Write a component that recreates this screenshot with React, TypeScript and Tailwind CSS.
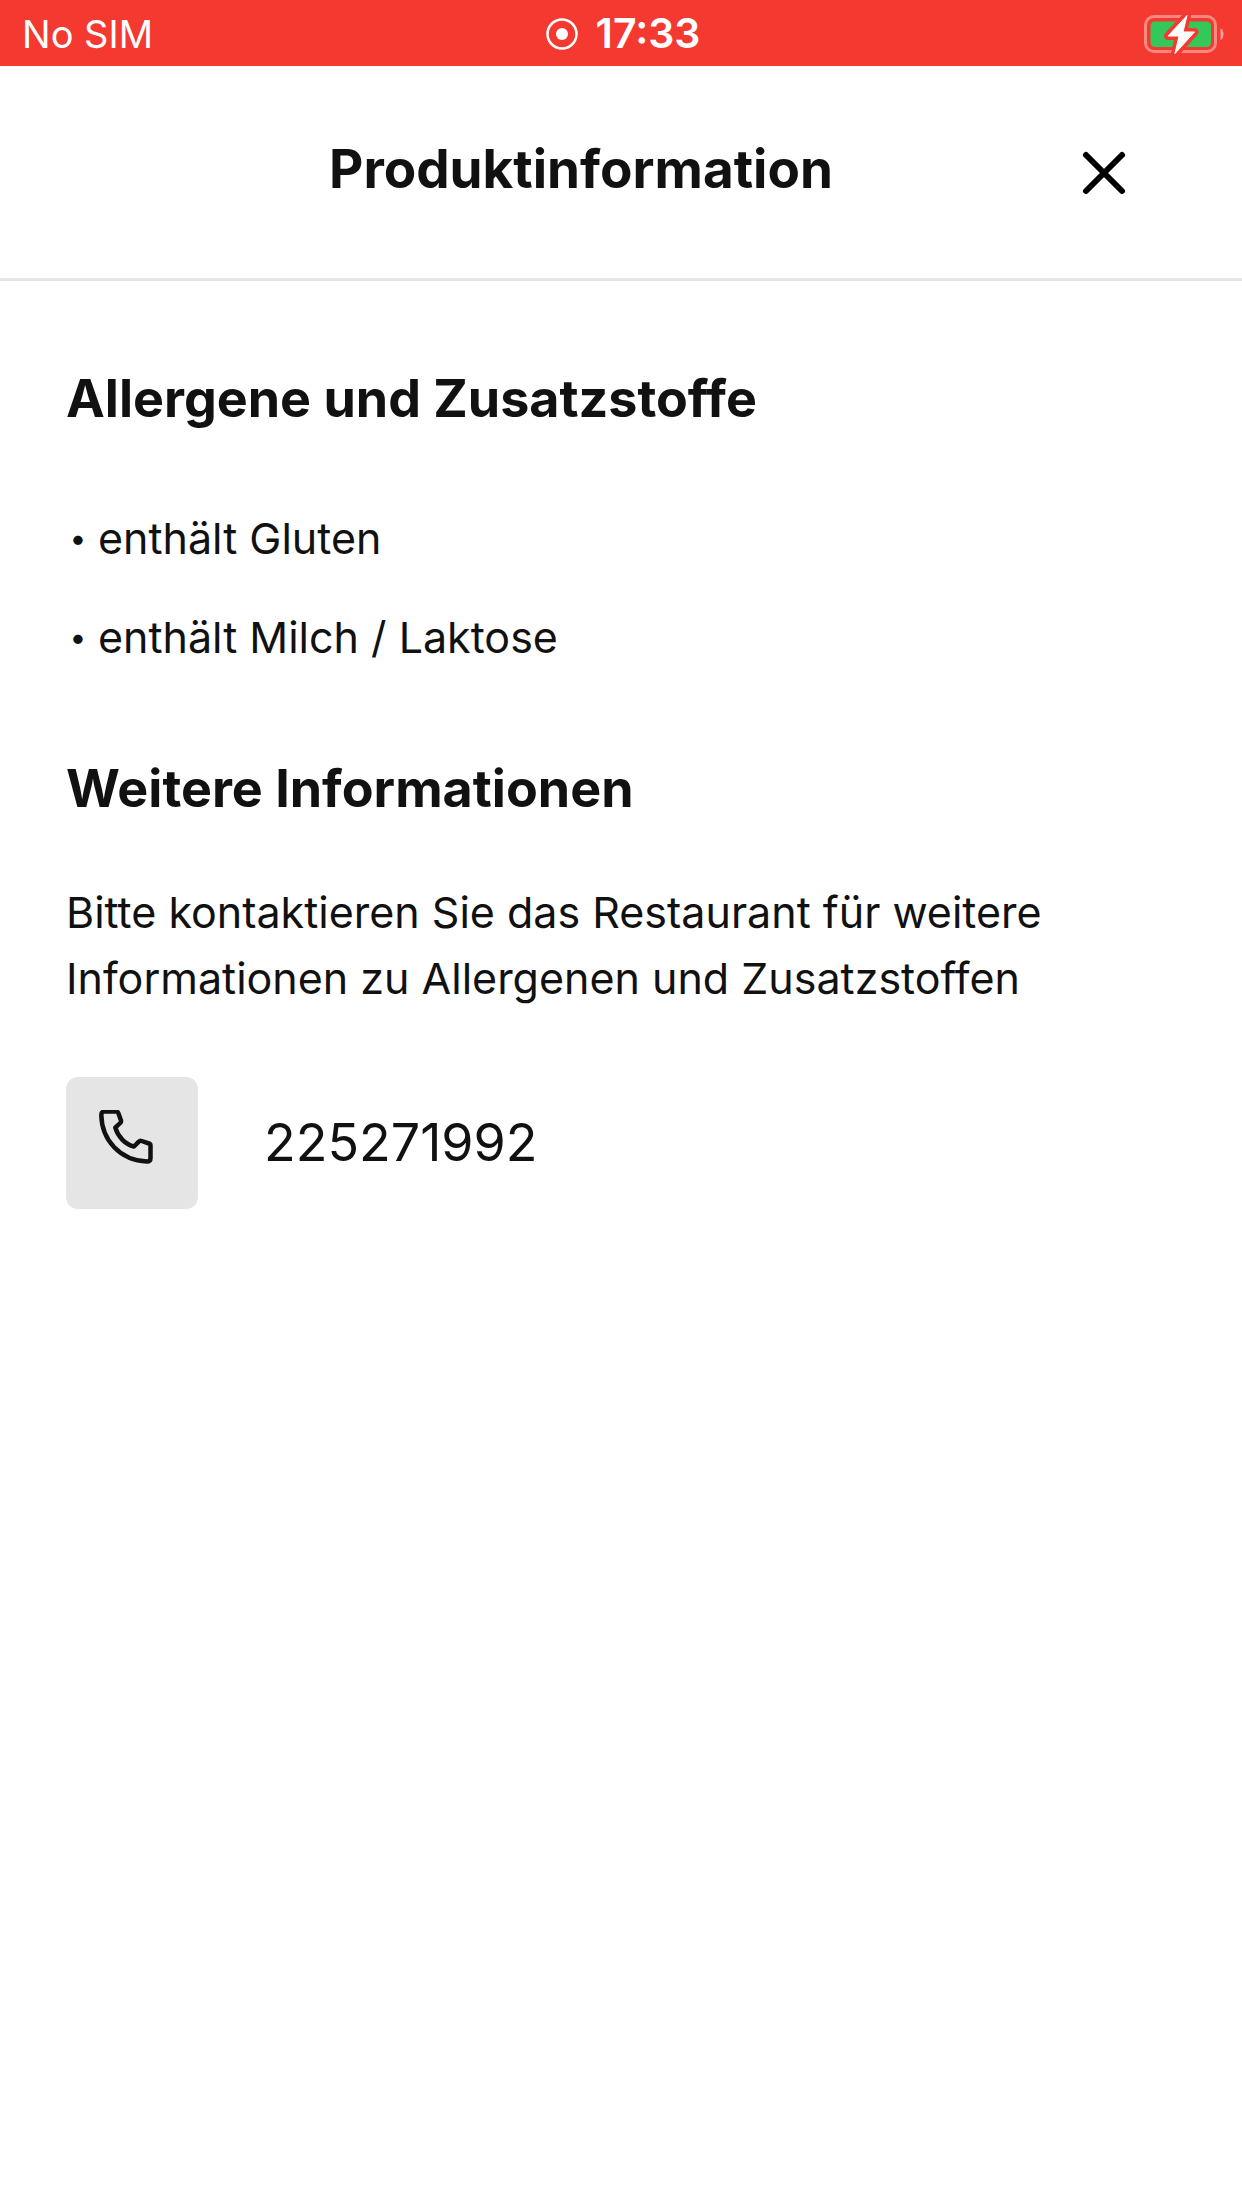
import { X } from "lucide-react"

const allergens = ["enthält Gluten", "enthält Milch / Laktose"]

function BatteryIcon() {
  const bolt = "M43 1.5 24 22h11l-4 17.5L50.5 18H39z"

  return (
    <svg className="h-10 w-20 justify-self-end" viewBox="0 0 80 40" fill="none">
      <rect x="1.5" y="2.5" width="70" height="35" rx="8.5" stroke="white" strokeOpacity="0.4" strokeWidth="3" />
      <rect x="6.5" y="7.5" width="60.5" height="25.5" rx="4.5" fill="#34c759" />
      <path d="M76.5 14.5c4 1.5 4 10 0 11.5z" fill="white" fillOpacity="0.5" />
      <path d={bolt} fill="#f33930" stroke="#f33930" strokeWidth="8" strokeLinejoin="round" />
      <path d={bolt} fill="white" stroke="white" strokeLinejoin="round" />
    </svg>
  )
}

function PhoneIcon() {
  return (
    <svg
      className="size-[66px]"
      viewBox="0 0 66 66"
      fill="none"
      stroke="currentColor"
      strokeWidth="4.5"
      strokeLinecap="round"
      strokeLinejoin="round"
    >
      <path d="M5.5 1.5H17Q18.7 1.5 19.3 3L22 10.5Q22.3 12 21.200 13L16.3 17.7C19 27 26.5 34.5 35 36.5L39.8 31.7Q41 30.400 42.700 31L50 33.5Q51.5 34 51.5 35.700V48Q51.5 51.5 48 51.5C21 50.5 2.800 30 2.300 5Q2.300 1.5 5.5 1.5Z" />
    </svg>
  )
}

function StatusBar() {
  return (
    <div className="grid h-[66px] grid-cols-3 items-center bg-[#f33930] pt-0.5 pr-[18px] pl-[22px] text-white">
      <span className="text-[38px]">No SIM</span>
      <div className="flex items-center justify-center gap-[18px] text-[41px] font-semibold">
        <svg className="size-8" viewBox="0 0 32 32" fill="none">
          <circle cx="16" cy="16" r="14.5" stroke="white" strokeWidth="2.5" />
          <circle cx="16" cy="16" r="6" fill="white" />
        </svg>
        <time>17:33</time>
      </div>
      <BatteryIcon />
    </div>
  )
}

export default function App() {
  return (
    <div className="min-h-screen bg-white font-[Inter,sans-serif] text-[#111111]">
      <StatusBar />
      <header className="flex h-[215px] items-center border-b-3 border-[#e5e5e5] px-[98px] pt-0.5">
        <h1 className="flex-1 pb-1.5 text-center text-[53px] font-bold">Produktinformation</h1>
        <button type="button" aria-label="Schließen" className="flex w-20 justify-center text-black">
          <X className="size-[72px]" />
        </button>
      </header>
      <main className="px-[66px] pt-[78px]">
        <h2 className="text-[52px] leading-20 font-bold">Allergene und Zusatzstoffe</h2>
        <ul className="mt-[66px] flex flex-col gap-8 text-[43px] leading-[67px]">
          {allergens.map((allergen) => (
            <li key={allergen} className="flex items-center gap-2">
              <span className="w-6 text-center text-3xl leading-[67px]">•</span>
              {allergen}
            </li>
          ))}
        </ul>
        <h2 className="mt-[78px] text-[52px] leading-20 font-bold">Weitere Informationen</h2>
        <p className="mt-[50px] text-[43px] leading-[66px]">
          Bitte kontaktieren Sie das Restaurant für weitere Informationen zu Allergenen und Zusatzstoffen
        </p>
        <div className="mt-[66px] flex items-center gap-[66px]">
          <button
            type="button"
            aria-label="Anrufen"
            className="flex size-[132px] items-center justify-center rounded-xl bg-[#e5e5e5]"
          >
            <PhoneIcon />
          </button>
          <a href="tel:225271992" className="text-[52px]">
            225271992
          </a>
        </div>
      </main>
    </div>
  )
}
